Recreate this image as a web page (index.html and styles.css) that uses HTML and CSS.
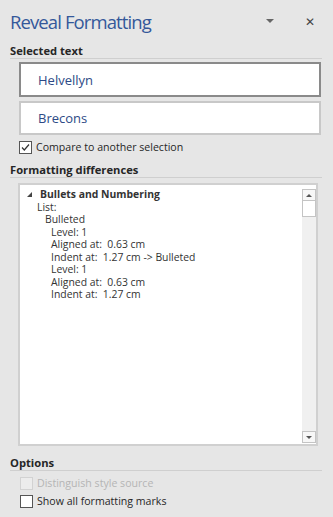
FILE: index.html
```html
<!DOCTYPE html>
<html>
<head>
	<meta charset="utf-8">
	<title>Reveal Formatting</title>
	<link rel="stylesheet" href="styles.css">
</head>
<body>
	<div class="pane">
		<div class="head">
			<span class="title">Reveal Formatting</span>
			<span class="menu"></span>
			<span class="close">&#x2715;</span>
		</div>

		<div class="section">Selected text</div>
		<div class="sel sel-active">Helvellyn</div>
		<div class="sel">Brecons</div>
		<label class="opt compare"><span class="check"><svg width="11" height="11" viewBox="0 0 11 11"><path d="M2 5.5 L4.3 8 L9 2.5" fill="none" stroke="#333" stroke-width="1.2"/></svg></span>Compare to another selection</label>

		<div class="section">Formatting differences</div>
		<div class="diff">
			<div class="tree">
				<div class="node"><span class="twisty"></span>Bullets and Numbering</div>
				<div class="l1">List:</div>
				<div class="l2">Bulleted</div>
				<div class="l3">Level: 1</div>
				<div class="l3">Aligned at:&nbsp; 0.63 cm</div>
				<div class="l3">Indent at:&nbsp; 1.27 cm -&gt; Bulleted</div>
				<div class="l3">Level: 1</div>
				<div class="l3">Aligned at:&nbsp; 0.63 cm</div>
				<div class="l3">Indent at:&nbsp; 1.27 cm</div>
			</div>
			<div class="scroll">
				<span class="btn up"></span>
				<span class="thumb"></span>
				<span class="track"></span>
				<span class="btn down"></span>
			</div>
		</div>

		<div class="section opts">Options</div>
		<label class="opt disabled first"><span class="check"></span>Distinguish style source</label>
		<label class="opt"><span class="check"></span>Show all formatting marks</label>
	</div>
</body>
</html>
```

FILE: styles.css
```css
* { margin: 0; padding: 0; box-sizing: border-box; }

body {
	background: #e6e6e6;
	font-family: "Open Sans", "Noto Sans", sans-serif;
	color: #262626;
}

.pane { display: flex; flex-direction: column; padding: 0 11px 0 10px; height: 517px; }

/* header */
.head { display: flex; align-items: center; height: 45px; padding-bottom: 3px; }
.title { flex: 1; font-size: 18.5px; color: #34589a; letter-spacing: -0.9px; }
.menu { width: 0; height: 0; border-left: 4px solid transparent; border-right: 4px solid transparent; border-top: 4px solid #666; margin-right: 31px; }
.close { font-size: 12px; color: #444; margin-right: 7px; }

/* section headings */
.section { font-size: 11.2px; font-weight: bold; border-bottom: 1px solid #cfcfcf; padding-bottom: 1px; line-height: 12px; }

.sel { margin: 3px 1px 0 9px; height: 35px; background: #fff; border: 2px solid #c8c8c8; font-size: 13px; color: #2d4a86; padding-left: 17px; display: flex; align-items: center; }
.sel + .sel { margin-top: 4px; height: 34px; }
.sel-active { border-color: #8a8a8a; }

.opt { display: flex; align-items: center; font-size: 10.6px; height: 18px; padding-left: 9px; }
.opt .check { width: 13px; height: 13px; border: 1px solid #555; background: #fff; margin-right: 4px; display: flex; align-items: center; justify-content: center; }
.opt.disabled { color: #b5b5b5; }
.opt.disabled .check { border-color: #d2d2d2; background: #ececec; }
.compare { margin-top: 3px; margin-bottom: 8px; }

/* differences box */
.diff { margin: 5px 4px 0 8px; height: 263px; background: #fff; border: 2px solid #d0d0d0; display: flex; }
.tree { flex: 1; font-size: 10.4px; line-height: 12.5px; padding-top: 3px; color: #333; }
.tree div { height: 12.5px; white-space: nowrap; }
.node { font-weight: bold; padding-left: 7px; display: flex; align-items: center; }
.twisty { width: 0; height: 0; border-left: 5px solid transparent; border-bottom: 5px solid #444; margin-right: 8px; }
.l1 { padding-left: 17px; }
.l2 { padding-left: 25px; }
.l3 { padding-left: 31px; }

.scroll { width: 14px; margin: 4px 0 1px 0; display: flex; flex-direction: column; background: #f0f0f0; }
.btn { height: 12px; border: 1px solid #c4c4c4; display: flex; align-items: center; justify-content: center; background: #f7f7f7; }
.btn::after { content: ""; width: 0; height: 0; border-left: 3px solid transparent; border-right: 3px solid transparent; }
.up::after { border-bottom: 3px solid #555; }
.down::after { border-top: 3px solid #555; }
.thumb { height: 16px; border: 1px solid #c4c4c4; border-top: 0; background: #fff; }
.track { flex: 1; }

.opts { margin-top: 11px; }
.opt.first { margin-top: 3px; }
.opts ~ .opt { padding-left: 10px; }
```
